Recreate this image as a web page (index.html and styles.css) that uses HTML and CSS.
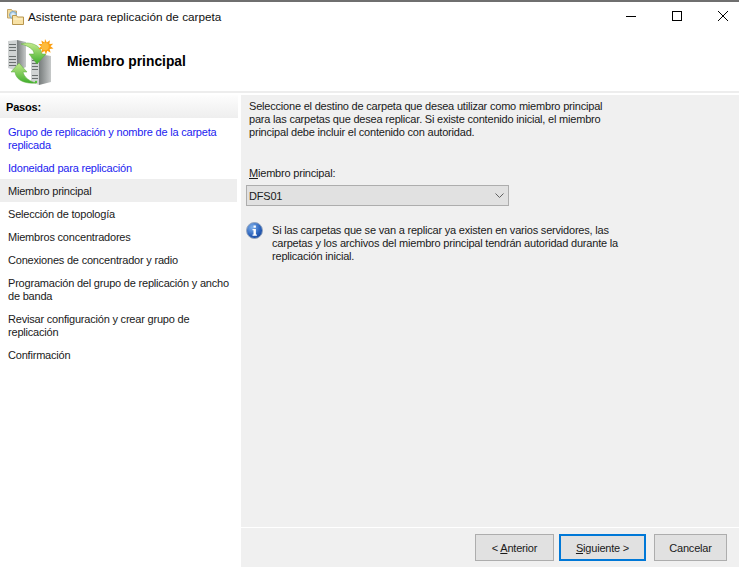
FILE: index.html
```html
<!DOCTYPE html>
<html lang="es">
<head>
<meta charset="utf-8">
<title>Asistente para replicación de carpeta</title>
<link rel="stylesheet" href="styles.css">
</head>
<body>
<div class="window">
  <div class="titlebar">
    <svg class="app-icon" width="17" height="17" viewBox="0 0 17 17">
      <path d="M.5 1.500h4l1 1.500h4v7h-9z" fill="#f4dc9c" stroke="#c2a468"/>
      <circle cx="6" cy="7" r="3.500" fill="#b9d8ee" stroke="#7ea6c6"/>
      <path d="M4 7h4M6 5v4" stroke="#eef6fb" fill="none"/>
      <path d="M5.500 7.500h4l1 1.500h6v7.500h-11z" fill="#f8e2a6" stroke="#b8964e"/>
      <path d="M6.500 11h9" stroke="#fdf3d0" fill="none"/>
    </svg>
    <span class="title-text">Asistente para replicación de carpeta</span>
    <div class="controls">
      <svg class="control" width="46" height="30" viewBox="0 0 46 30"><path d="M18 14.500h10" stroke="#000" fill="none"/></svg>
      <svg class="control" width="46" height="30" viewBox="0 0 46 30"><rect x="18.500" y="9.500" width="9" height="9" stroke="#000" fill="none"/></svg>
      <svg class="control" width="46" height="30" viewBox="0 0 46 30"><path d="M18 9l10 10M28 9L18 19" stroke="#000" fill="none"/></svg>
    </div>
  </div>
  <header class="banner">
    <svg class="banner-icon" width="46" height="48" viewBox="0 0 46 48">
      <defs>
        <linearGradient id="srv" x1="0" y1="0" x2="1" y2="0">
          <stop offset="0" stop-color="#777c7c"/><stop offset="0.55" stop-color="#a2a6a6"/><stop offset="1" stop-color="#c6c9c9"/>
        </linearGradient>
        <linearGradient id="arr" x1="0" y1="0" x2="0" y2="1">
          <stop offset="0" stop-color="#c4ea8c"/><stop offset="1" stop-color="#3fae2c"/>
        </linearGradient>
      </defs>
      <path d="M9 2l9 2v25l-9 4z" fill="url(#srv)"/>
      <path d="M0 3l9-1v31l-9-3z" fill="#d0d3d3"/>
      <path d="M1 6.500h7M1 9.500h7M1 12.500h7M1 18.500h7M1 21.500h7M1 24.500h7M1 27.500h7" stroke="#6a6f6f" fill="none"/>
      <path d="M31 16l12 2v26l-12 3z" fill="url(#srv)"/>
      <path d="M23 18l8-2v31l-8-3z" fill="#d0d3d3"/>
      <path d="M24 22.500h6M24 25.500h6M24 28.500h6M24 31.500h6M24 37.500h6M24 40.500h6" stroke="#6a6f6f" fill="none"/>
      <circle cx="28" cy="44" r="1.200" fill="#4fc836"/>
      <path d="M13 6C22 3 33 7 34 16h4l-9 10-8-10h5C26 11 20 8 13 6z" fill="url(#arr)" stroke="#5cab3e" stroke-width=".5"/>
      <path d="M28 45C18 46 8 43 7 34H3l8-9 8 9h-4c1 5 6 9 13 11z" fill="url(#arr)" stroke="#5cab3e" stroke-width=".5"/>
      <path d="M37 1l1.800 3.400 3.100-2.100-.5 3.700 3.800-.3-2.700 2.500 3 2.300-3.900.4 1 3.800-3.300-2-1.300 3.700-1.500-3.500-3.200 2.100.8-3.800-3.900-.2 2.900-2.500-2.800-2.400 3.800 0-.7-3.700 3.200 2.200z" fill="#fb9f12"/>
      <circle cx="37" cy="8.500" r="3.800" fill="#fdbb3c"/>
    </svg>
    <h1 class="banner-title">Miembro principal</h1>
  </header>
  <div class="main">
    <aside class="steps">
      <div class="steps-head">Pasos:</div>
      <ul class="step-list">
        <li class="step done">Grupo de replicación y nombre de la carpeta<br>replicada</li>
        <li class="step done">Idoneidad para replicación</li>
        <li class="step current">Miembro principal</li>
        <li class="step">Selección de topología</li>
        <li class="step">Miembros concentradores</li>
        <li class="step">Conexiones de concentrador y radio</li>
        <li class="step">Programación del grupo de replicación y ancho<br>de banda</li>
        <li class="step">Revisar configuración y crear grupo de<br>replicación</li>
        <li class="step">Confirmación</li>
      </ul>
    </aside>
    <section class="panel">
      <div class="content">
        <p class="intro">Seleccione el destino de carpeta que desea utilizar como miembro principal<br>para las carpetas que desea replicar. Si existe contenido inicial, el miembro<br>principal debe incluir el contenido con autoridad.</p>
        <label class="field-label"><u>M</u>iembro principal:</label>
        <div class="select">
          <span>DFS01</span>
          <svg width="9" height="5" viewBox="0 0 9 5"><path d="M.5.500l4 4 4-4" stroke="#606060" fill="none"/></svg>
        </div>
        <div class="note">
          <svg class="info" width="17" height="17" viewBox="0 0 17 17">
            <defs><radialGradient id="inf" cx=".35" cy=".3" r=".85"><stop offset="0" stop-color="#7fb0ea"/><stop offset=".6" stop-color="#2a62bc"/><stop offset="1" stop-color="#123f90"/></radialGradient></defs>
            <circle cx="8.500" cy="8.500" r="8" fill="url(#inf)" stroke="#97a7bf"/>
            <rect x="7.500" y="3.500" width="2.400" height="2.200" fill="#fff"/>
            <path d="M6.500 7h3.400v5.500h1v1.200H6.500v-1.200h1V8.200h-1z" fill="#fff"/>
          </svg>
          <p class="note-text">Si las carpetas que se van a replicar ya existen en varios servidores, las<br>carpetas y los archivos del miembro principal tendrán autoridad durante la<br>replicación inicial.</p>
        </div>
      </div>
      <footer class="buttons">
        <button class="btn btn-prev">&lt; <u>A</u>nterior</button>
        <button class="btn btn-next"><u>S</u>iguiente &gt;</button>
        <button class="btn btn-cancel">Cancelar</button>
      </footer>
    </section>
  </div>
</div>
</body>
</html>
```
FILE: styles.css
```css
* { box-sizing: border-box; }
html, body { margin: 0; height: 100%; }
body {
  background: #fff;
  font-family: "Liberation Sans", Arial, sans-serif;
  font-size: 11px;
  letter-spacing: -0.2px;
  color: #1a1a1a;
  overflow: hidden;
}
.window {
  height: 567px;
  display: flex;
  flex-direction: column;
  border-top: 2px solid #6f6f6f;
}
.titlebar {
  height: 30px;
  flex: none;
  display: flex;
  align-items: center;
  padding-left: 7px;
}
.app-icon { flex: none; margin-right: 4px; margin-bottom: 2px; }
.title-text { font-size: 11.75px; letter-spacing: 0; color: #111; flex: 1; padding-bottom: 2px; }
.controls { display: flex; margin-right: -7px; }
.control { display: block; }
.banner {
  height: 61px;
  flex: none;
  display: flex;
  align-items: center;
  padding-left: 8px;
  border-bottom: 2px solid #ededed;
}
.banner-icon { flex: none; margin-right: 13px; }
.banner-title { margin: 0; font-size: 13.800px; letter-spacing: 0; font-weight: 700; color: #000; }
.main { flex: 1; display: flex; min-height: 0; }
.steps { width: 241px; flex: none; padding-top: 2px; }
.steps-head {
  width: 238px;
  height: 23px;
  padding: 6px 0 0 6px;
  font-weight: 700;
  line-height: 13px;
  color: #000;
  background: linear-gradient(#fdfdfd, #eeeeee);
}
.step-list { list-style: none; margin: 0; padding: 2px 0 0; width: 237px; }
.step { padding: 6px 0 4px 8px; line-height: 13px; }
.step.done { color: #1c1cf0; }
.step.current { background: #eeeeee; }
.panel {
  flex: 1;
  background: #f0f0f0;
  display: flex;
  flex-direction: column;
  margin-top: 2px;
}
.content { flex: 1; padding: 5px 0 0 8px; }
.intro { margin: 0; line-height: 13px; }
.field-label { display: block; margin: 28px 0 0 0; line-height: 13px; }
.select {
  width: 263px;
  height: 21px;
  margin: 5px 0 0 -3px;
  padding: 0 4px 0 2px;
  display: flex;
  align-items: center;
  justify-content: space-between;
  background: #e1e1e1;
  border: 1px solid #adadad;
}
.note { display: flex; margin: 15px 0 0 -3px; }
.info { flex: none; margin: 1px 8px 0 0; }
.note-text { margin: 3px 0 0 1px; line-height: 13px; }
.buttons {
  height: 40px;
  flex: none;
  display: flex;
  justify-content: flex-end;
  align-items: flex-start;
  padding: 6px 0 0;
  border-top: 1px solid #fff;
}
.btn {
  height: 27px;
  font: inherit;
  letter-spacing: inherit;
  color: #1a1a1a;
  background: #e1e1e1;
  border: 1px solid #adadad;
  padding: 0;
}
.btn-prev { width: 79px; margin-right: 5px; }
.btn-next { width: 87px; margin-right: 8px; border: 2px solid #0078d7; }
.btn-cancel { width: 73px; margin-right: 12px; }
```
